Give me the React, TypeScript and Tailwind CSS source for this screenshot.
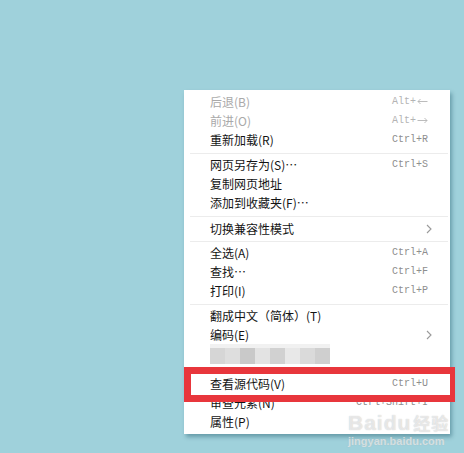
import React from 'react';

const cjk = "font-['Noto_Sans_CJK_SC','Noto_Sans',sans-serif]";
const mono = "font-['Liberation_Mono',monospace]";

interface Item {
  label: string;
  shortcut?: React.ReactNode;
  disabled?: boolean;
  submenu?: boolean;
}

function Row({ label, shortcut, disabled, submenu }: Item) {
  return (
    <div className="flex h-[19px] items-center justify-between pl-[26px] pr-[22px]">
      <span className={`${cjk} text-[12px] leading-none ${disabled ? 'text-[#a9a9a9]' : 'text-[#141414]'}`}>
        {label}
      </span>
      {shortcut && (
        <span className={`${mono} flex items-center text-[10px] leading-none ${disabled ? 'text-[#b4b4b4]' : 'text-[#8e8e8e]'}`}>
          {shortcut}
        </span>
      )}
      {submenu && (
        <svg width="6" height="10" viewBox="0 0 6 10" className="-mr-[4px]">
          <path d="M1 1 L5 5 L1 9" fill="none" stroke="#9a9a9a" strokeWidth="1.1" />
        </svg>
      )}
    </div>
  );
}

function Arrow({ dir }: { dir: 'left' | 'right' }) {
  return (
    <svg width="11" height="7" viewBox="0 0 11 7" className="ml-[1px]">
      {dir === 'left' ? (
        <path d="M10.5 3.5 H1 M3.5 1 L1 3.5 L3.5 6" fill="none" stroke="#b4b4b4" strokeWidth="0.9" />
      ) : (
        <path d="M0.5 3.5 H10 M7.5 1 L10 3.5 L7.5 6" fill="none" stroke="#b4b4b4" strokeWidth="0.9" />
      )}
    </svg>
  );
}

function Sep({ className }: { className: string }) {
  return (
    <div className={className}>
      <div className="ml-[6px] mr-[2px] h-px bg-[#ececec]" />
    </div>
  );
}

const mosaic = ['#d6d6d6', '#dedede', '#c9c9c9', '#e3e3e3', '#d1d1d1', '#e8e8e8', '#dadada', '#cfcfcf'];

export default function App() {
  return (
    <div className="relative h-[453px] w-[464px] overflow-hidden bg-[#9fd1db] pl-[184px] pt-[90px]">
      <div className="w-[266px] bg-white pb-[3px] pt-[2px] shadow-[2px_3px_4px_rgba(0,60,80,0.35)]">
        <Row label="后退(B)" shortcut={<>Alt+<Arrow dir="left" /></>} disabled />
        <Row label="前进(O)" shortcut={<>Alt+<Arrow dir="right" /></>} disabled />
        <Row label="重新加载(R)" shortcut="Ctrl+R" />
        <Sep className="h-[6px] pt-[4px]" />
        <Row label="网页另存为(S)…" shortcut="Ctrl+S" />
        <Row label="复制网页地址" />
        <Row label="添加到收藏夹(F)…" />
        <Sep className="h-[7px] pt-[4px]" />
        <Row label="切换兼容性模式" submenu />
        <Sep className="h-[5px] pt-[3px]" />
        <Row label="全选(A)" shortcut="Ctrl+A" />
        <Row label="查找…" shortcut="Ctrl+F" />
        <Row label="打印(I)" shortcut="Ctrl+P" />
        <Sep className="h-[6px] pt-[4px]" />
        <Row label="翻成中文（简体）(T)" />
        <Row label="编码(E)" submenu />
        {/* blurred row */}
        <div className="flex h-[20px] flex-col pl-[26px]">
          <div className="h-[4px] w-[120px] bg-[#f1f1f1]" />
          <div className="flex flex-1">
            {mosaic.map((c, i) => (
              <div key={i} className="w-[15px]" style={{ backgroundColor: c }} />
            ))}
          </div>
        </div>
        <div className="h-[10px]" />
        <Row label="查看源代码(V)" shortcut="Ctrl+U" />
        <Row label="审查元素(N)" shortcut="Ctrl+Shift+I" />
        <Row label="属性(P)" />
      </div>

      {/* red highlight */}
      <div className="absolute left-[184px] top-[367px] h-[35px] w-[271px] border-[7px] border-r-[5px] border-[#e8363c]" />

      {/* watermark */}
      <div className="pointer-events-none absolute left-[348px] top-[412px] flex flex-col items-start">
        <span className="font-['Liberation_Sans',sans-serif] text-[21px] font-bold leading-none tracking-[1px] text-white/60 [text-shadow:0_0_1px_rgba(150,150,150,0.6)]">
          Baidu<span className={`${cjk} ml-[2px] text-[17px]`}>经验</span>
        </span>
        <span className="mt-[3px] font-['Liberation_Sans',sans-serif] text-[11px] font-bold leading-none text-white/55 [text-shadow:0_0_1px_rgba(160,160,160,0.6)]">
          jingyan.baidu.com
        </span>
      </div>
    </div>
  );
}
